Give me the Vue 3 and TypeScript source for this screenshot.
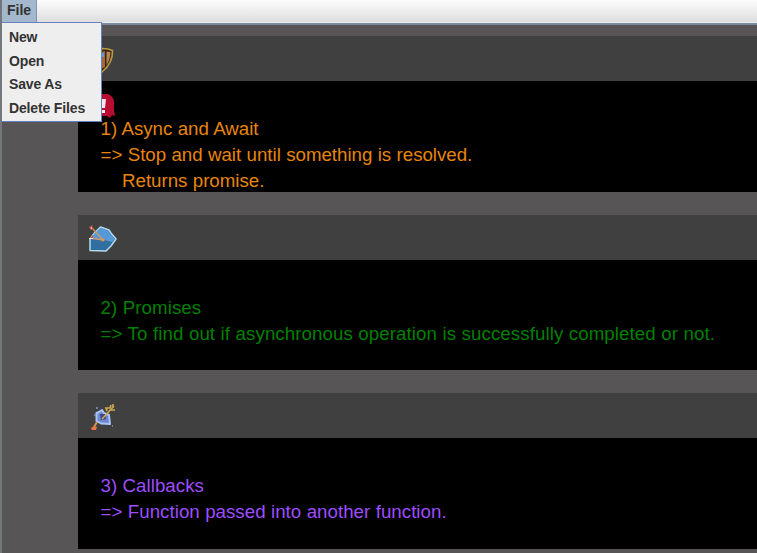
<script setup lang="ts">
interface Note {
  id: number
  tone: string
  icon: string
  lines: string[]
}

const menuItems: string[] = ['New', 'Open', 'Save As', 'Delete Files']

const notes: Note[] = [
  {
    id: 1,
    tone: 'orange',
    icon: 'shield',
    lines: ['1) Async and Await', '=> Stop and wait until something is resolved.', '    Returns promise.'],
  },
  {
    id: 2,
    tone: 'green',
    icon: 'gem',
    lines: ['2) Promises', '=> To find out if asynchronous operation is successfully completed or not.'],
  },
  {
    id: 3,
    tone: 'purple',
    icon: 'arrow',
    lines: ['3) Callbacks', '=> Function passed into another function.'],
  },
]
</script>

<template>
  <div class="window">
    <header class="menubar">
      <button class="menu-title">File</button>
      <ul class="menu">
        <li v-for="item in menuItems" :key="item">{{ item }}</li>
      </ul>
    </header>
    <main class="notes">
      <section v-for="note in notes" :key="note.id" class="note">
        <div class="note-head">
          <svg v-if="note.icon === 'shield'" class="icon" viewBox="0 0 32 32">
            <path d="M4 9Q12 9 17 6.500Q22 6.500 26.500 8.500Q27 21 16 30Q5 24 4 9Z" fill="#352412" stroke="#b99a42" stroke-width="1.6" />
            <path d="M13 10l6-1v16l-6 3z" fill="#a5673c" />
            <path d="M20.500 9.500l4 .5q-.5 8-4 13z" fill="#bb8458" />
            <path d="M13 11h5v4h-5z" fill="#579fce" />
          </svg>
          <svg v-else-if="note.icon === 'gem'" class="icon" viewBox="0 0 32 32">
            <path d="M4 18L8.500 12L14.500 6L23 9L25 12L30 18L25 25L20 30L4 29.500Z" fill="#2f6e9f" stroke="#b4d9ef" stroke-width="1.500" stroke-linejoin="round" />
            <path d="M8 13L14.500 7L22.500 10L24.500 13L29 18L26 21L18 19L5 18Z" fill="#5799d5" />
            <path d="M6 7L17 19M4 17L17 19" stroke="#c99a6c" stroke-width="1.400" />
            <path d="M3 6l4-2-1 3 3 1-4 1zM4 17l3-3v3z" fill="#d04e3a" />
            <path d="M4 7l2-1 0 2zM3 17h4v1h-4z" fill="#ede4d6" />
            <circle cx="17" cy="19" r="1.600" fill="#e0954f" />
          </svg>
          <svg v-else class="icon" viewBox="0 0 32 32">
            <path d="M10.500 14L13 13L16 11L18 14L23 16L24 25L15 24.500L10.500 22Z" fill="#6e86cf" stroke="#a9c5f4" stroke-width="2" stroke-linejoin="round" />
            <path d="M14 15L19 15L20 20L15 21Z" fill="#3b4685" />
            <path d="M16 20L28 7M21 12l-1-3 4 0M24 11l5 0M24 9l1-3M27 8v-3" stroke="#d0a650" stroke-width="1.700" fill="none" />
            <path d="M8 28L11 23" stroke="#d19448" stroke-width="2" />
            <path d="M5 29l3-2 3 1-1 3-4 0z" fill="#ef7545" />
            <path d="M10 9h2M9 15v2M26 27h1" stroke="#8097d4" stroke-width="1.400" />
          </svg>
        </div>
        <div class="note-body" :class="note.tone">
          <svg v-if="note.id === 1" class="alert" viewBox="0 0 28 26">
            <path d="M4 0H20Q25 2 26 7V16L27 22L24 21L22 24L19 22H2V8Z" fill="#b80c30" />
            <path d="M13 5h5l-1 9h-3zM14 16h3v3h-3z" fill="#f7e6ed" />
          </svg>
          <p v-for="line in note.lines" :key="line">{{ line }}</p>
        </div>
      </section>
    </main>
  </div>
</template>

<style>
body {
  margin: 0;
  overflow: hidden;
}
</style>

<style scoped>
.window {
  box-sizing: border-box;
  width: 757px;
  height: 553px;
  overflow: hidden;
  background: #575555;
  border-left: 2px solid #73767a;
  font-family: "Liberation Sans", Arial, sans-serif;
}
.menubar {
  position: relative;
  box-sizing: border-box;
  height: 25px;
  margin-left: -1px;
  background: linear-gradient(#fdfdfd, #dcdcdc);
  border-bottom: 2px solid #7c8b9b;
  box-shadow: inset 0 -1px #eeeeee;
}
.menu-title {
  display: block;
  box-sizing: border-box;
  width: 36px;
  height: 22px;
  margin: 0;
  padding: 0 0 2px 1px;
  border: 0;
  border-right: 1px solid #7d95b5;
  background: #a3b8cc;
  color: #333;
  font: bold 14px "Liberation Sans", Arial, sans-serif;
  text-align: center;
}
.menu {
  position: absolute;
  z-index: 2;
  top: 22px;
  left: 0;
  box-sizing: border-box;
  width: 101px;
  height: 100px;
  margin: 0;
  padding: 3px 0 0 7px;
  list-style: none;
  background: #eeeeee;
  border: 1px solid #6382bf;
  color: #333;
  font-size: 14px;
  font-weight: bold;
  line-height: 23.7px;
  letter-spacing: -0.15px;
  white-space: nowrap;
}
.notes {
  display: flex;
  flex-direction: column;
  gap: 22.5px;
  padding: 11.3px 0 0 76px;
}
.note-head {
  box-sizing: border-box;
  height: 45px;
  padding: 6px 0 0 8px;
  background: #404040;
}
.icon {
  display: block;
  width: 32px;
  height: 32px;
}
.note-body {
  position: relative;
  box-sizing: border-box;
  height: 110.8px;
  padding: 35px 0 0 22.5px;
  background: #000;
  font-size: 18.7px;
  line-height: 26px;
}
.note-body p {
  margin: 0;
  white-space: pre;
  word-spacing: 0.2px;
}
.alert {
  position: absolute;
  top: 13px;
  left: 10px;
  width: 28px;
  height: 26px;
}
.orange { color: #e8850c; letter-spacing: -0.01px; }
.green { color: #008000; letter-spacing: 0.08px; }
.purple { color: #9d4dff; letter-spacing: 0.03px; }
</style>
